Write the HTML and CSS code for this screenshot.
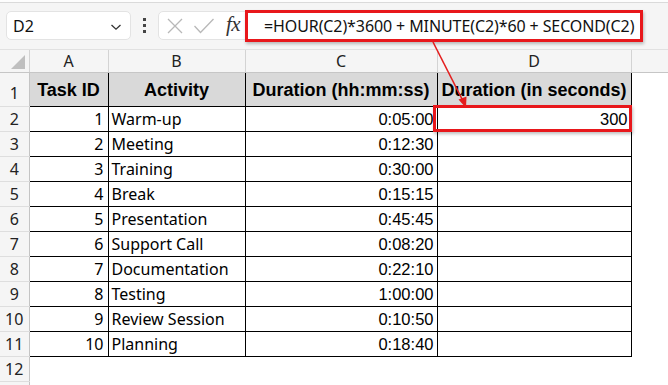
FILE: index.html
```html
<!DOCTYPE html>
<html>
<head>
<meta charset="utf-8">
<link rel="stylesheet" href="styles.css">
</head>
<body>
<div class="app">
  <div class="topstrip"></div>
  <div class="toolbar">
    <div class="namebox">
      <span class="name">D2</span>
      <svg class="chev" width="12" height="8" viewBox="0 0 12 8"><path d="M1.5 2 L6 6.2 L10.5 2" fill="none" stroke="#333" stroke-width="1.3"/></svg>
    </div>
    <div class="dots"><i></i><i></i><i></i></div>
    <div class="fxbox">
      <svg width="18" height="18" viewBox="0 0 18 18" class="xicon"><path d="M2 2 L16 16 M16 2 L2 16" stroke="#b8b8b8" stroke-width="1.3" fill="none"/></svg>
      <svg width="22" height="18" viewBox="0 0 22 18" class="ckicon"><path d="M1.5 9 L7.5 15.5 L20.5 2" stroke="#b8b8b8" stroke-width="1.3" fill="none"/></svg>
      <span class="fx">fx</span>
    </div>
    <div class="formula">
      <div class="formula-inner">=HOUR(C2)*3600 + MINUTE(C2)*60 + SECOND(C2)</div>
    </div>
  </div>
  <div class="sheet">
    <table class="grid">
      <colgroup>
        <col class="c-rh"><col class="c-a"><col class="c-b"><col class="c-c"><col class="c-d"><col class="c-e">
      </colgroup>
      <tr class="colhead">
        <th class="corner"><span class="tri"></span></th>
        <th>A</th><th>B</th><th>C</th><th>D</th><th class="e"></th>
      </tr>
      <tr class="r1">
        <td class="rh">1</td>
        <td class="hd">Task ID</td><td class="hd">Activity</td><td class="hd">Duration (hh:mm:ss)</td><td class="hd">Duration (in seconds)</td><td class="blank"></td>
      </tr>
      <tr><td class="rh">2</td><td class="num">1</td><td class="txt">Warm-up</td><td class="tm">0:05:00</td><td class="tm">300</td><td class="blank"></td></tr>
      <tr><td class="rh">3</td><td class="num">2</td><td class="txt">Meeting</td><td class="tm">0:12:30</td><td class="tm"></td><td class="blank"></td></tr>
      <tr><td class="rh">4</td><td class="num">3</td><td class="txt">Training</td><td class="tm">0:30:00</td><td class="tm"></td><td class="blank"></td></tr>
      <tr><td class="rh">5</td><td class="num">4</td><td class="txt">Break</td><td class="tm">0:15:15</td><td class="tm"></td><td class="blank"></td></tr>
      <tr><td class="rh">6</td><td class="num">5</td><td class="txt">Presentation</td><td class="tm">0:45:45</td><td class="tm"></td><td class="blank"></td></tr>
      <tr><td class="rh">7</td><td class="num">6</td><td class="txt">Support Call</td><td class="tm">0:08:20</td><td class="tm"></td><td class="blank"></td></tr>
      <tr><td class="rh">8</td><td class="num">7</td><td class="txt">Documentation</td><td class="tm">0:22:10</td><td class="tm"></td><td class="blank"></td></tr>
      <tr><td class="rh">9</td><td class="num">8</td><td class="txt">Testing</td><td class="tm">1:00:00</td><td class="tm"></td><td class="blank"></td></tr>
      <tr><td class="rh">10</td><td class="num">9</td><td class="txt">Review Session</td><td class="tm">0:10:50</td><td class="tm"></td><td class="blank"></td></tr>
      <tr><td class="rh">11</td><td class="num">10</td><td class="txt">Planning</td><td class="tm">0:18:40</td><td class="tm"></td><td class="blank"></td></tr>
      <tr class="empty"><td class="rh">12</td><td></td><td></td><td></td><td></td><td></td></tr>
      <tr class="empty"><td class="rh"></td><td></td><td></td><td></td><td></td><td></td></tr>
    </table>
    <div class="sel-box"></div>
  </div>
  <svg class="arrow" width="668" height="385" viewBox="0 0 668 385">
    <line x1="433" y1="42" x2="463" y2="101" stroke="#e41e1e" stroke-width="1.6"/>
    <path d="M466 108 L458.5 99.5 L466.5 96.5 Z" fill="#e41e1e"/>
  </svg>
</div>
</body>
</html>
```

FILE: styles.css
```css
html, body {
  margin: 0;
  padding: 0;
  background: #ffffff;
  width: 668px;
  height: 385px;
  overflow: hidden;
}
.app {
  position: relative;
  width: 668px;
  height: 385px;
  overflow: hidden;
  font-family: "Noto Sans", "Liberation Sans", sans-serif;
  color: #000;
}
.topstrip {
  height: 2px;
  background: #fdfdfd;
  border-bottom: 1px solid #dadada;
}
.toolbar {
  background: #f5f5f5;
  border-bottom: 1px solid #e1e1e1;
  display: flex;
  align-items: center;
  padding-left: 6px;
  box-sizing: border-box;
  height: 47px;
}
.namebox {
  width: 125px;
  height: 29px;
  box-sizing: border-box;
  background: #fff;
  border: 1px solid #e3e3e3;
  border-radius: 5px;
  display: flex;
  align-items: center;
  padding: 0 8px 0 6px;
  justify-content: space-between;
  margin-top: -1px;
}
.name {
  font-size: 16px;
  color: #111;
  font-family: "Noto Sans", sans-serif;
}
.chev { margin-top: 2px; }
.dots {
  width: 27px;
  display: flex;
  flex-direction: column;
  align-items: center;
  gap: 3px;
  margin-top: -1px;
}
.dots i {
  display: block;
  width: 3px;
  height: 3px;
  background: #444;
}
.fxbox {
  width: 96px;
  height: 29px;
  box-sizing: border-box;
  background: #fff;
  border: 1px solid #e3e3e3;
  border-radius: 5px;
  display: flex;
  align-items: center;
  padding-left: 7px;
  margin-top: -1px;
}
.xicon { margin-right: 9px; }
.ckicon { margin-right: 10px; }
.fx {
  font-family: "Liberation Serif", "DejaVu Serif", serif;
  font-style: italic;
  font-size: 21px;
  color: #333;
  letter-spacing: -0.5px;
  margin-top: -3px;
  margin-left: 1px;
}
.formula {
  position: relative;
  margin-left: -9px;
  width: 398px;
  height: 32px;
  box-sizing: border-box;
  border: 3px solid #e8171b;
  margin-top: -1px;
  box-shadow: 1px 2px 3px rgba(0,0,0,0.25);
  background: #fff;
}
.formula-inner {
  height: 100%;
  padding-left: 16px;
  font-family: "Noto Sans", "Liberation Sans", sans-serif;
  font-size: 16px;
  line-height: 26px;
  color: #111;
  white-space: nowrap;
  letter-spacing: -0.1px;
}
.sheet {
  position: relative;
}
.grid {
  border-collapse: collapse;
  table-layout: fixed;
  width: 668px;
}
.c-rh { width: 29px; }
.c-a { width: 79px; }
.c-b { width: 137px; }
.c-c { width: 192px; }
.c-d { width: 194px; }
.c-e { width: 37px; }
.grid td, .grid th {
  padding: 0;
  overflow: hidden;
  white-space: nowrap;
}
.colhead th {
  height: 22px;
  background: #f5f5f5;
  font-weight: normal;
  font-size: 16px;
  color: #222;
  border-left: 1px solid #d3d3d3;
  border-bottom: 1px solid #c6c6c6;
  text-align: center;
  font-family: "Noto Sans", sans-serif;
  line-height: 22px;
}
.colhead th.corner {
  border-left: none;
  position: relative;
  border-right: 1px solid #d3d3d3;
}
.tri {
  position: absolute;
  right: 4px;
  bottom: 3px;
  width: 0;
  height: 0;
  border-left: 14px solid transparent;
  border-bottom: 14px solid #bfbfbf;
}
.rh {
  background: #f5f5f5;
  border-right: 1px solid #c4c4c4;
  border-bottom: 1px solid #dedede;
  text-align: center;
  font-size: 16px;
  color: #222;
  font-family: "Noto Sans", sans-serif;
}
.r1 td { height: 31px; }
.r1 .rh { vertical-align: bottom; line-height: 25px; }
.grid tr:not(.colhead):not(.r1) td { height: 24px; line-height: 24px; }
.hd {
  background: #d9d9d9;
  font-family: "Liberation Sans", Arial, sans-serif;
  font-weight: bold;
  font-size: 18px;
  text-align: center;
  border: 1px solid #000;
  color: #000;
  padding-top: 2px !important;
}
.num, .txt, .tm {
  border: 1px solid #000;
  font-size: 16px;
}
.num {
  text-align: right;
  padding-right: 4px !important;
  font-family: "Noto Sans", sans-serif;
}
.txt {
  text-align: left;
  padding-left: 3px !important;
  font-family: "Noto Sans", sans-serif;
}
.tm {
  text-align: right;
  padding-right: 3px !important;
  font-family: "Liberation Sans", Arial, sans-serif;
  font-size: 16.5px;
}
.blank { border-left: 1px solid #000; }
.sel-box {
  position: absolute;
  left: 433px;
  top: 55px;
  width: 199px;
  height: 27px;
  box-sizing: border-box;
  border: 3px solid #e8171b;
  box-shadow: 1px 2px 3px rgba(0,0,0,0.25);
}
.arrow {
  position: absolute;
  left: 0;
  top: 0;
  pointer-events: none;
}
```
